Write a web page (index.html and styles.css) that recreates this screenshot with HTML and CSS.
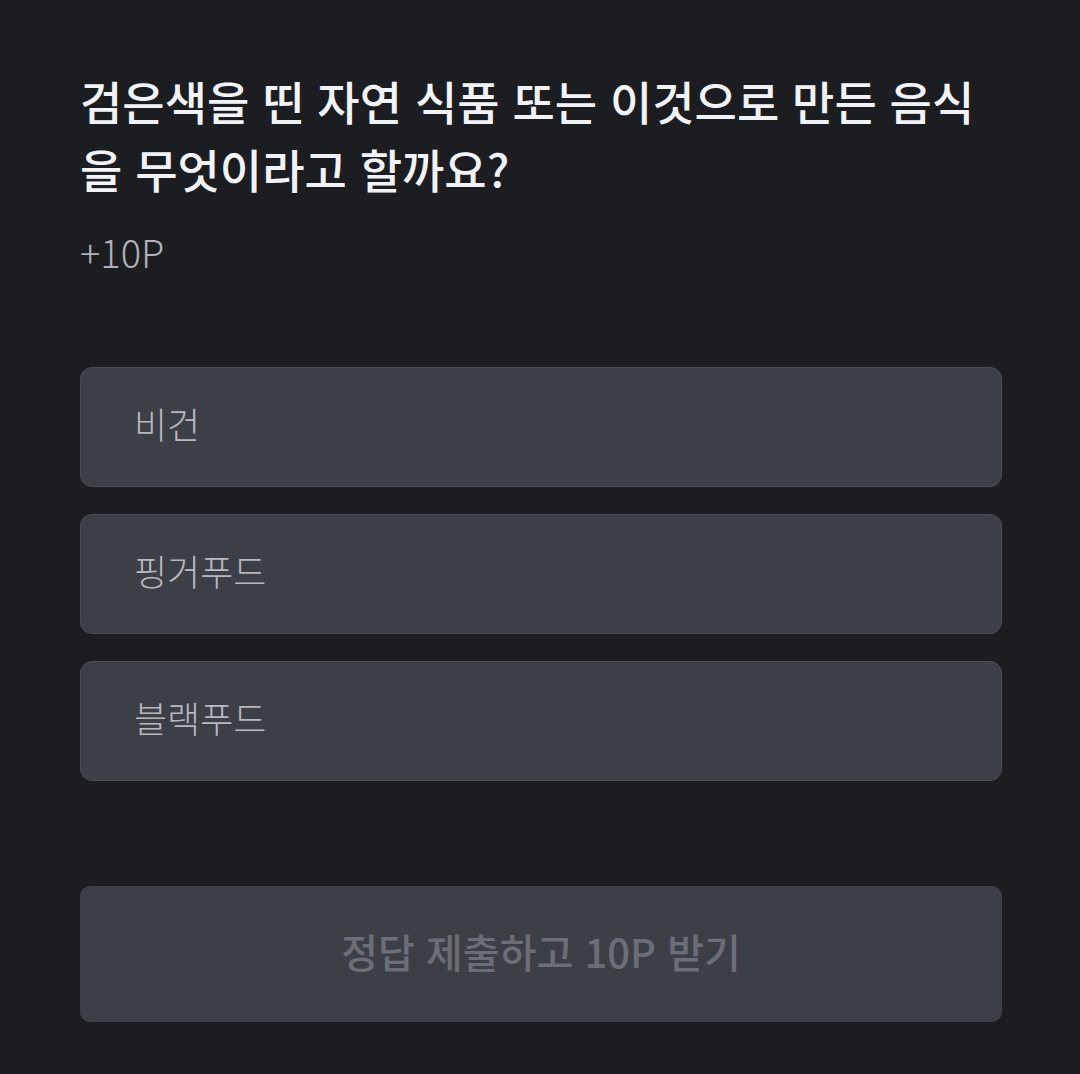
FILE: index.html
```html
<!DOCTYPE html>
<html lang="ko">

<head>
    <meta charset="UTF-8">
    <meta name="viewport" content="width=device-width, initial-scale=1.0">
    <link rel="stylesheet" href="styles.css">
    <title>퀴즈</title>
</head>

<body>
    <div class="quiz">
        <h1 class="question">검은색을 띤 자연 식품 또는 이것으로 만든 음식을 무엇이라고 할까요?</h1>
        <p class="reward">+10P</p>

        <!-- 보기 -->
        <div class="options">
            <button type="button" class="option">비건</button>
            <button type="button" class="option">핑거푸드</button>
            <button type="button" class="option">블랙푸드</button>
        </div>

        <button type="button" class="submit" disabled>정답 제출하고 10P 받기</button>
    </div>
</body>

</html>
```

FILE: styles.css
```css
body {
    font-family: 'Noto Sans CJK KR', 'Noto Sans', sans-serif;
    margin: 0;
    padding: 0;
    background-color: #1c1d21;
    height: 1074px;
}

.quiz {
    padding: 66px 78px 0 80px;
    display: flex;
    flex-direction: column;
}

.question {
    margin: 0;
    font-size: 46px;
    line-height: 68px;
    font-weight: 500;
    color: #f2f3f6;
    word-break: break-all;
}

.reward {
    margin: 26px 0 0;
    font-size: 38px;
    line-height: 48px;
    font-weight: 300;
    color: #afb2b9;
}

.options {
    display: flex;
    flex-direction: column;
    gap: 27px;
    margin-top: 91px;
}

.option {
    height: 120px;
    padding: 0 0 9px 53px;
    text-align: left;
    font-family: inherit;
    font-size: 36px;
    font-weight: 300;
    color: #b6b8be;
    background-color: #3d3f47;
    border: 1.5px solid #4b4d55;
    border-radius: 12px;
    cursor: pointer;
}

.submit {
    margin-top: 105px;
    height: 136px;
    padding: 0 0 7px;
    font-family: inherit;
    font-size: 40px;
    font-weight: 500;
    color: #6b6e77;
    background-color: #3d3f47;
    border: none;
    border-radius: 10px;
}
```
